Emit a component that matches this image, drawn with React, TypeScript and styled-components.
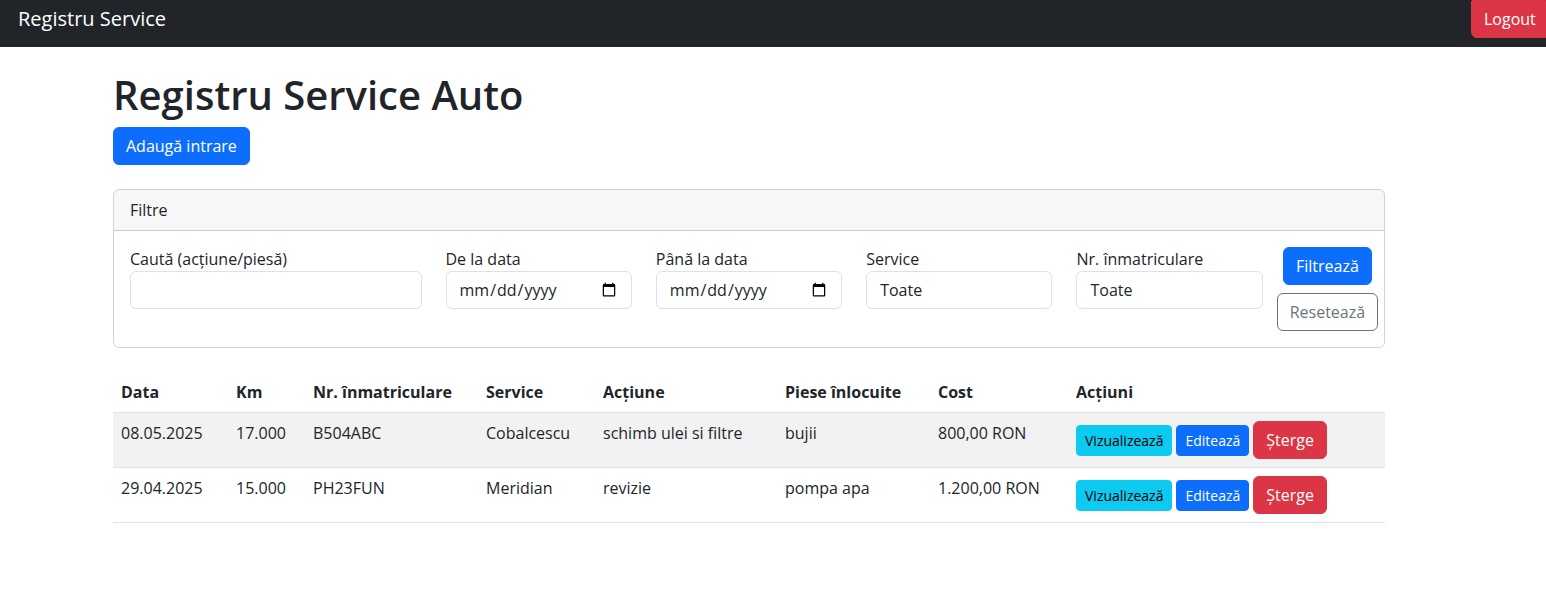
import React from 'react'
import styled, { createGlobalStyle } from 'styled-components'

const GlobalStyle = createGlobalStyle`
  * { box-sizing: border-box; }
  body {
    margin: 0;
    font-family: "Open Sans", "Noto Sans", sans-serif;
    font-size: 16px;
    line-height: 1.5;
    color: #212529;
    background: #fff;
  }
`

const Navbar = styled.nav`
  height: 47px;
  background-color: #212529;
  display: flex;
  align-items: flex-start;
  justify-content: space-between;
`

const Brand = styled.div`
  padding: 4px 0 0 18px;
  font-size: 20px;
  line-height: 30px;
  color: #fff;
`

const Btn = styled.button<{ $variant: 'primary' | 'danger' | 'info' | 'outline'; $small?: boolean }>`
  font-family: inherit;
  display: inline-block;
  vertical-align: middle;
  border: 1px solid transparent;
  cursor: pointer;
  white-space: nowrap;
  font-size: ${p => (p.$small ? '14px' : '16px')};
  line-height: ${p => (p.$small ? '21px' : '24px')};
  padding: ${p => (p.$small ? '4px 8px' : '6px 12px')};
  border-radius: ${p => (p.$small ? '4px' : '6px')};
  color: ${p => (p.$variant === 'info' ? '#000' : p.$variant === 'outline' ? '#6c757d' : '#fff')};
  background-color: ${p =>
    p.$variant === 'primary' ? '#0d6efd'
      : p.$variant === 'danger' ? '#dc3545'
        : p.$variant === 'info' ? '#0dcaf0'
          : 'transparent'};
  border-color: ${p =>
    p.$variant === 'primary' ? '#0d6efd'
      : p.$variant === 'danger' ? '#dc3545'
        : p.$variant === 'info' ? '#0dcaf0'
          : '#6c757d'};
`

const LogoutBtn = styled(Btn)`
  width: 75px;
  height: 38px;
  border-radius: 2px 0 0 6px;
`

const RowBtn = styled(Btn)`
  margin-right: 4px;
`

const Page = styled.main`
  width: 1272px;
  margin: 24px 0 0 113px;
`

const Title = styled.h1`
  margin: 0 0 8px;
  font-size: 40px;
  font-weight: 600;
  line-height: 1.2;
`

const Card = styled.section`
  margin-top: 24px;
  border: 1px solid rgba(0, 0, 0, 0.175);
  border-radius: 6px;
`

const CardHeader = styled.div`
  padding: 8px 16px;
  background-color: rgba(0, 0, 0, 0.03);
  border-bottom: 1px solid rgba(0, 0, 0, 0.175);
  border-radius: 5px 5px 0 0;
`

// bootstrap-like column: n/12 of the row (content + one gutter), less the gutter
const span = (n: number) => `calc((100% + 24px) * ${n} / 12 - 24px)`

const FilterRow = styled.form`
  padding: 16px;
  display: grid;
  grid-template-columns: ${span(3)} ${span(2)} ${span(2)} ${span(2)} ${span(2)} ${span(1)};
  column-gap: 24px;
`

const Field = styled.div`
  display: flex;
  flex-direction: column;
  min-width: 0;
`

const Label = styled.label`
  line-height: 24px;
`

const Control = styled.input`
  font-family: inherit;
  font-size: 16px;
  line-height: 24px;
  color: #212529;
  height: 38px;
  width: 100%;
  padding: 6px 12px;
  border: 1px solid #dee2e6;
  border-radius: 6px;
  background: #fff;
`

const Select = styled.select`
  font-family: inherit;
  font-size: 16px;
  line-height: 24px;
  color: #212529;
  height: 38px;
  width: 100%;
  padding: 6px 13px;
  border: 1px solid #dee2e6;
  border-radius: 6px;
  background: #fff;
  appearance: none;
`

const ButtonStack = styled.div`
  display: flex;
  flex-direction: column;
  align-items: center;
  gap: 8px;
  min-width: 0;
`

const Table = styled.table`
  margin-top: 24px;
  width: 100%;
  border-collapse: collapse;
  table-layout: fixed;
`

const Th = styled.th<{ $w: number }>`
  width: ${p => p.$w}px;
  text-align: left;
  font-weight: 700;
  padding: 8px;
  line-height: 24px;
  border-bottom: 1px solid #dee2e6;
`

const Row = styled.tr<{ $striped?: boolean }>`
  background-color: ${p => (p.$striped ? '#f2f2f2' : '#fff')};
`

const Td = styled.td`
  padding: 8px;
  line-height: 24px;
  vertical-align: top;
  border-bottom: 1px solid #dee2e6;
  white-space: nowrap;
`

const columns: [string, number][] = [
  ['Data', 115],
  ['Km', 77],
  ['Nr. înmatriculare', 173],
  ['Service', 117],
  ['Acțiune', 182],
  ['Piese înlocuite', 153],
  ['Cost', 138],
  ['Acțiuni', 317],
]

const entries = [
  { date: '08.05.2025', km: '17.000', plate: 'B504ABC', service: 'Cobalcescu', action: 'schimb ulei si filtre', parts: 'bujii', cost: '800,00 RON' },
  { date: '29.04.2025', km: '15.000', plate: 'PH23FUN', service: 'Meridian', action: 'revizie', parts: 'pompa apa', cost: '1.200,00 RON' },
]

const App: React.FC = () => (
  <>
    <GlobalStyle />
    <Navbar>
      <Brand>Registru Service</Brand>
      <LogoutBtn $variant='danger'>Logout</LogoutBtn>
    </Navbar>
    <Page>
      <Title>Registru Service Auto</Title>
      <Btn $variant='primary'>Adaugă intrare</Btn>

      <Card>
        <CardHeader>Filtre</CardHeader>
        <FilterRow onSubmit={e => e.preventDefault()}>
          <Field>
            <Label>Caută (acțiune/piesă)</Label>
            <Control type='text' />
          </Field>
          <Field>
            <Label>De la data</Label>
            <Control type='date' />
          </Field>
          <Field>
            <Label>Până la data</Label>
            <Control type='date' />
          </Field>
          <Field>
            <Label>Service</Label>
            <Select defaultValue=''>
              <option value=''>Toate</option>
            </Select>
          </Field>
          <Field>
            <Label>Nr. înmatriculare</Label>
            <Select defaultValue=''>
              <option value=''>Toate</option>
            </Select>
          </Field>
          <ButtonStack>
            <Btn $variant='primary' type='submit'>Filtrează</Btn>
            <Btn $variant='outline' type='button'>Resetează</Btn>
          </ButtonStack>
        </FilterRow>
      </Card>

      <Table>
        <thead>
          <tr>
            {columns.map(([name, w]) => <Th key={name} $w={w}>{name}</Th>)}
          </tr>
        </thead>
        <tbody>
          {entries.map((e, i) => (
            <Row key={e.plate} $striped={i % 2 === 0}>
              <Td>{e.date}</Td>
              <Td>{e.km}</Td>
              <Td>{e.plate}</Td>
              <Td>{e.service}</Td>
              <Td>{e.action}</Td>
              <Td>{e.parts}</Td>
              <Td>{e.cost}</Td>
              <Td>
                <RowBtn $variant='info' $small>Vizualizează</RowBtn>
                <RowBtn $variant='primary' $small>Editează</RowBtn>
                <RowBtn $variant='danger'>Șterge</RowBtn>
              </Td>
            </Row>
          ))}
        </tbody>
      </Table>
    </Page>
  </>
)

export default App
